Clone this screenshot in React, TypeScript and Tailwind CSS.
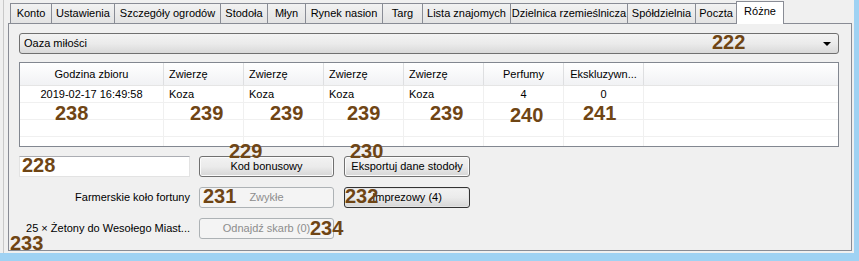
import React from 'react'

const tabs = [
  { name: 'Konto', w: 42 },
  { name: 'Ustawienia', w: 64 },
  { name: 'Szczegóły ogrodów', w: 107 },
  { name: 'Stodoła', w: 48 },
  { name: 'Młyn', w: 39 },
  { name: 'Rynek nasion', w: 78 },
  { name: 'Targ', w: 41 },
  { name: 'Lista znajomych', w: 89 },
  { name: 'Dzielnica rzemieślnicza', w: 118 },
  { name: 'Spółdzielnia', w: 69 },
  { name: 'Poczta', w: 42 },
]

const columns = [
  { name: 'Godzina zbioru', w: 144, align: 'center' },
  { name: 'Zwierzę', w: 80, align: 'left' },
  { name: 'Zwierzę', w: 80, align: 'left' },
  { name: 'Zwierzę', w: 80, align: 'left' },
  { name: 'Zwierzę', w: 80, align: 'left' },
  { name: 'Perfumy', w: 80, align: 'center' },
  { name: 'Ekskluzywn...', w: 80, align: 'center' },
]

const row = ['2019-02-17 16:49:58', 'Koza', 'Koza', 'Koza', 'Koza', '4', '0']

// numerki naniesione na zrzut
const marks = [
  { t: '222', x: 712, y: 31 },
  { t: '238', x: 55, y: 102 },
  { t: '239', x: 190, y: 102 },
  { t: '239', x: 270, y: 102 },
  { t: '239', x: 347, y: 102 },
  { t: '239', x: 430, y: 102 },
  { t: '240', x: 510, y: 104 },
  { t: '241', x: 583, y: 102 },
  { t: '228', x: 22, y: 154 },
  { t: '229', x: 229, y: 140 },
  { t: '230', x: 350, y: 140 },
  { t: '231', x: 203, y: 185 },
  { t: '232', x: 345, y: 185 },
  { t: '234', x: 310, y: 217 },
  { t: '233', x: 10, y: 232 },
]

const btn = 'rounded-[3px] border border-[#707070] bg-gradient-to-b from-[#f2f2f2] via-[#ebebeb] to-[#d6d6d6] shadow-[inset_0_0_0_1px_#fbfbfb] whitespace-nowrap'
const btnOff = 'rounded-[3px] border border-[#adb2b5] bg-[#f4f4f4] text-[#8d8d8d] whitespace-nowrap'

export default function App() {
  return (
    <div className="relative w-[859px] h-[261px] overflow-hidden bg-[#f0f0f0] border-r-[5px] border-b-[8px] border-[#9fd2f3] font-['Liberation_Sans',Arial,sans-serif] text-[11px] text-black">
      <div className="h-full border-l border-[#c9c9c9] ml-[3px] pl-[4px] pt-[1px]">
        {/* Tab strip */}
        <div className="flex items-end h-[22px] pl-[2px]">
          {tabs.map((tab) => (
            <div
              key={tab.name}
              style={{ width: tab.w }}
              className="h-[20px] -mr-px border border-b-0 border-[#898c95] bg-gradient-to-b from-[#f2f2f2] to-[#e3e3e3] flex items-center justify-center leading-none whitespace-nowrap"
            >
              {tab.name}
            </div>
          ))}
          <div className="relative z-10 w-[48px] h-[23px] -mb-px border border-b-0 border-[#898c95] bg-white flex items-start pt-[4px] justify-center leading-none">
            Różne
          </div>
        </div>

        {/* Tab page */}
        <div className="w-[844px] h-[228px] border border-[#898c95] bg-[#f0f0f0] pl-[10px] pt-[9px]">
          {/* Combo */}
          <div className="w-[820px] h-[21px] rounded-[3px] border border-[#707070] bg-gradient-to-b from-[#f3f3f3] via-[#ebebeb] to-[#d9d9d9] flex items-center justify-between pl-[4px] pr-[7px]">
            <span>Oaza miłości</span>
            <span className="w-0 h-0 border-l-[4px] border-r-[4px] border-t-[4px] border-l-transparent border-r-transparent border-t-black" />
          </div>

          {/* List view */}
          <div className="mt-[8px] w-[820px] h-[85px] border border-[#828790] bg-white overflow-hidden">
            <div className="flex h-[23px] bg-gradient-to-b from-white to-[#f1f2f4] border-b border-[#e5e5e5]">
              {columns.map((c, i) => (
                <div
                  key={i}
                  style={{ width: c.w }}
                  className={`border-r border-[#dedfe1] flex items-center px-[5px] whitespace-nowrap ${c.align === 'center' ? 'justify-center' : 'justify-start'}`}
                >
                  {c.name}
                </div>
              ))}
            </div>
            {[0, 1, 2, 3].map((r) => (
              <div key={r} className="flex h-[17px] border-b border-[#f0f0f0]">
                {columns.map((c, i) => (
                  <div
                    key={i}
                    style={{ width: c.w }}
                    className={`border-r border-[#f0f0f0] flex items-center px-[5px] leading-none ${c.align === 'center' ? 'justify-center' : 'justify-start'}`}
                  >
                    {r === 0 ? row[i] : ''}
                  </div>
                ))}
              </div>
            ))}
          </div>

          {/* Bottom controls */}
          <div className="mt-[9px] flex flex-col gap-[10px]">
            <div className="flex items-center">
              <div className="w-[171px] h-[21px] bg-white border border-[#e3e3e3] border-t-[#abadb3]" />
              <button className={`ml-[9px] w-[135px] h-[21px] ${btn}`}>Kod bonusowy</button>
              <button className={`ml-[10px] w-[126px] h-[21px] ${btn}`}>Eksportuj dane stodoły</button>
            </div>
            <div className="flex items-center">
              <div className="w-[171px] text-right whitespace-nowrap">Farmerskie koło fortuny</div>
              <button className={`ml-[9px] w-[135px] h-[21px] ${btnOff}`}>Zwykłe</button>
              <button className="ml-[10px] w-[126px] h-[21px] rounded-[3px] border border-[#333333] bg-gradient-to-b from-[#f2f2f2] via-[#ebebeb] to-[#d6d6d6] shadow-[inset_0_0_0_1px_#e4e4e4] whitespace-nowrap">
                Imprezowy (4)
              </button>
            </div>
            <div className="flex items-center">
              <div className="w-[171px] text-right whitespace-nowrap">25 × Żetony do Wesołego Miast...</div>
              <button className={`ml-[9px] w-[135px] h-[21px] ${btnOff}`}>Odnajdź skarb (0)</button>
            </div>
          </div>
        </div>
      </div>

      {marks.map((m, i) => (
        <span
          key={i}
          style={{ left: m.x, top: m.y }}
          className="absolute font-['Liberation_Sans',Arial,sans-serif] font-bold text-[20px] leading-[22px] text-[#6f4514]"
        >
          {m.t}
        </span>
      ))}
    </div>
  )
}
